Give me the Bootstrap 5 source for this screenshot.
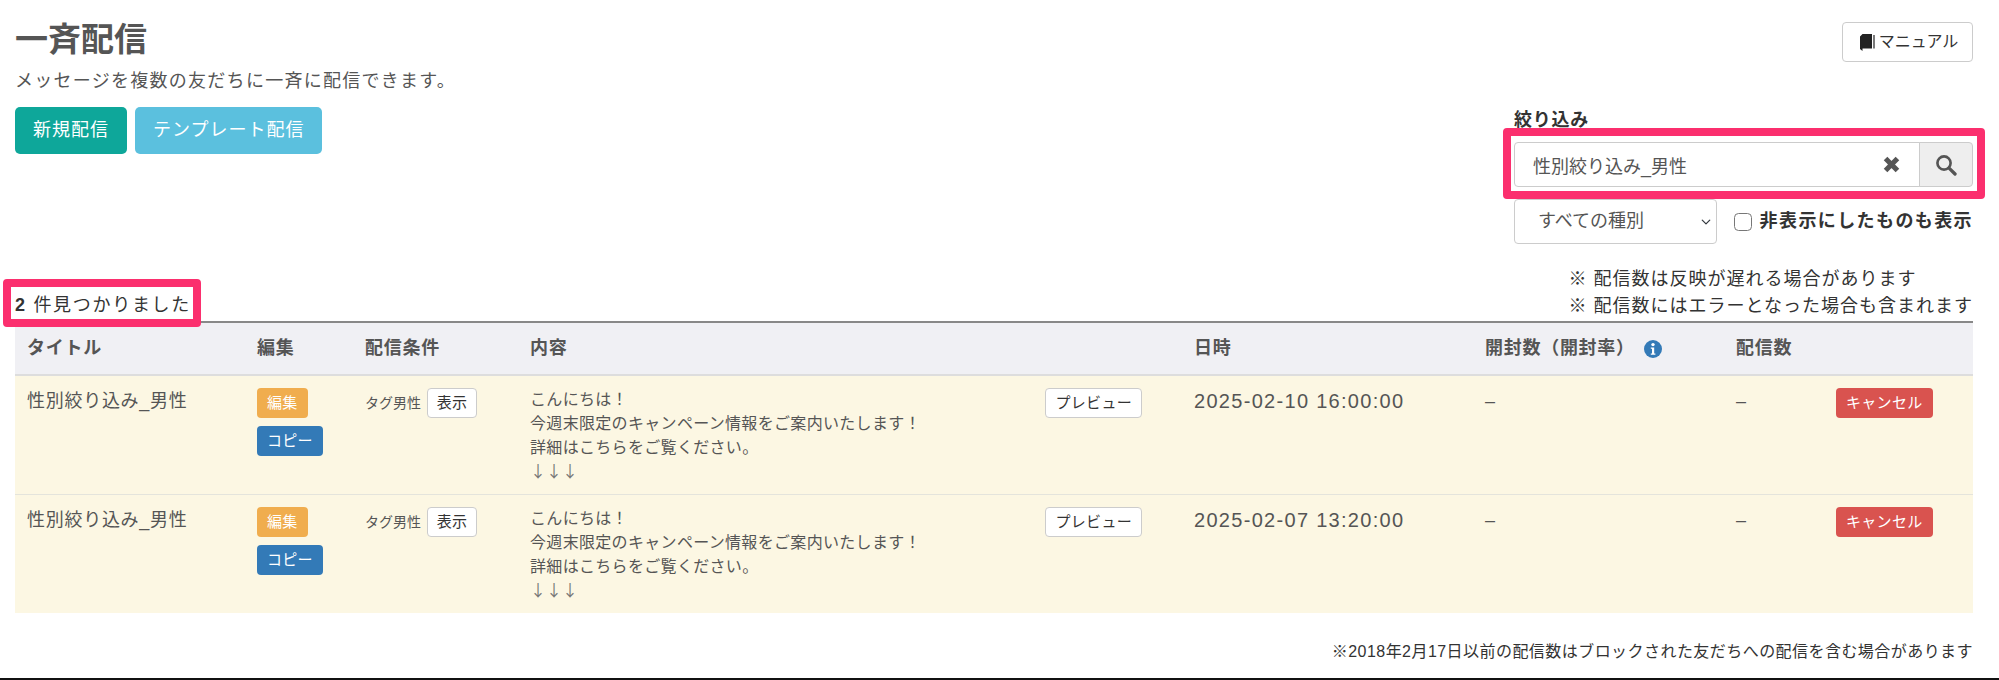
<!DOCTYPE html>
<html lang="ja">
<head>
    <meta charset="UTF-8">
    <title>一斉配信</title>
    <link href="https://cdn.jsdelivr.net/npm/bootstrap@5.3.0/dist/css/bootstrap.min.css" rel="stylesheet">
    <style>
        body {
            font-family: "Liberation Sans", "Noto Sans CJK JP", sans-serif;
            font-size: 18px;
            letter-spacing: .04em;
            color: #555;
            height: 680px;
            overflow: hidden;
        }
        .page-wrap { height: 680px; padding: 0 26px 0 15px; border-bottom: 2px solid #111; }
        .page-title { font-size: 33px; font-weight: 700; line-height: 40px; margin: 20px 0 8px; color: #555; letter-spacing: 0; }
        .page-sub { line-height: 26px; margin-bottom: 13px; letter-spacing: 1.27px; }
        .act-btn { font-size: 18px; letter-spacing: 1px; color: #fff; height: 47px; padding: 0 17px; border: 1px solid transparent; border-radius: 5px; }
        .act-teal { background: #0ea79a; }
        .act-info { background: #5bc0de; }
        .side-col { width: 459px; padding-top: 22px; }
        .manual-btn { font-size: 16px; height: 40px; width: 131px; color: #333; background: #fff; border: 1px solid #ccc; border-radius: 4px; padding: 0 0 0 3px; }
        .filter-label { font-weight: 700; font-size: 18px; color: #333; line-height: 26px; margin-top: 45px; }
        .filter-box { position: relative; margin-top: 9px; }
        .filter-box .form-control { height: 45px; font-size: 18px; color: #555; border-color: #ccc; padding-left: 18px; padding-right: 40px; border-radius: 4px 0 0 4px; }
        .filter-box .input-group-text { width: 54px; justify-content: center; background: #eee; border-color: #ccc; border-radius: 0 4px 4px 0; padding: 0; }
        .clear-mark { position: absolute; right: 73px; top: 14px; z-index: 5; line-height: 1; }
        .pink-frame { position: absolute; border: 8px solid #fb2f6e; border-radius: 4px; pointer-events: none; z-index: 6; }
        .filter-frame { left: -11px; right: -12px; top: -14px; bottom: -12px; }
        .kind-select { width: 206px; height: 45px; font-size: 18px; color: #555; border-color: #ccc; border-radius: 4px; padding-left: 23px; background-position: right 3px center; background-size: 14px 10px; }
        .filter-row { margin-top: 12px; gap: 17px; }
        .hide-check { font-weight: 700; color: #333; font-size: 18px; letter-spacing: 1.4px; white-space: nowrap; }
        .hide-check input { width: 18px; height: 18px; margin: 0 8px 0 0; border-color: #777; border-radius: 3px; }
        .status-row { margin-top: 22px; padding-bottom: 1px; }
        .count-line { position: relative; font-size: 18px; letter-spacing: 1.7px; color: #333; line-height: 26px; padding-bottom: 2px; }
        .count-frame { left: -12px; right: -10px; top: -13px; bottom: -7px; }
        .note-lines { line-height: 27px; color: #333; font-size: 18px; letter-spacing: 1px; }
        .list-table { table-layout: fixed; width: 1958px; margin: 0; border-top: 2px solid #888; color: #555; }
        .list-table th { background: #f0f0f4; font-size: 18px; padding: 12px; height: 50px; color: #555; border-bottom: 2px solid #ddd; vertical-align: middle; }
        .list-table td { background: #fcf7e3; padding: 12px 12px 10px; font-size: 18px; line-height: 26px; border-bottom: 1px solid #e4e4dc; vertical-align: top; }
        .list-table tr:last-child td { border-bottom: 0; }
        .list-table th:nth-child(1) { width: 230px; }
        .list-table th:nth-child(2) { width: 108px; }
        .list-table th:nth-child(3) { width: 165px; }
        .list-table th:nth-child(4) { width: 664px; }
        .list-table th:nth-child(5) { width: 291px; }
        .list-table th:nth-child(6) { width: 251px; }
        .list-table th:nth-child(7) { width: 100px; }
        .mini-btn { font-size: 15px; line-height: 28px; height: 30px; padding: 0 9px; border-radius: 4px; border: 1px solid transparent; color: #fff; display: inline-block; letter-spacing: .02em; white-space: nowrap; }
        .mini-orange { background: #f0ad4e; }
        .mini-blue { background: #337ab7; }
        .mini-red { background: #d9534f; }
        .mini-white { background: #fff; border-color: #ccc; color: #333; }
        .tag-text { font-size: 14px; letter-spacing: 0; }
        .msg-text { font-size: 16px; line-height: 24px; letter-spacing: .02em; }
        .down-arrows { font-family: "Noto Sans CJK JP", sans-serif; letter-spacing: 0; line-height: 1; display: inline-block; color: #777; }
        .preview-cell { margin-right: 28px; }
        .date-text { font-size: 20px !important; letter-spacing: 1.3px; }
        .foot-note { font-size: 16px; color: #333; letter-spacing: .45px; margin-top: 27px; line-height: 24px; }
    </style>
</head>
<body>
<div class="page-wrap">
    <div class="d-flex justify-content-between">
        <div>
            <h1 class="page-title">一斉配信</h1>
            <p class="page-sub">メッセージを複数の友だちに一斉に配信できます。</p>
            <div class="d-flex gap-2">
                <button class="act-btn act-teal">新規配信</button>
                <button class="act-btn act-info">テンプレート配信</button>
            </div>
        </div>
        <div class="side-col">
            <div class="text-end">
                <button class="manual-btn">
                    <svg width="15" height="17" viewBox="0 0 15 17" class="me-1"><path d="M0 2.5 2.5 0H12v14.5H2.5V17L0 15z" fill="#222"/><path d="M13.4 1h1.2v13.5h-1.2z" fill="#222"/></svg>マニュアル
                </button>
            </div>
            <div class="filter-label">絞り込み</div>
            <div class="filter-box">
                <div class="input-group">
                    <input class="form-control" type="text" value="性別絞り込み_男性">
                    <span class="input-group-text">
                        <svg width="22" height="22" viewBox="0 0 20 20"><circle cx="8.2" cy="8.2" r="6" fill="none" stroke="#555" stroke-width="2.4"/><path d="m12.8 12.8 5.4 5.4" stroke="#555" stroke-width="3" stroke-linecap="round"/></svg>
                    </span>
                </div>
                <svg class="clear-mark" width="17" height="17" viewBox="0 0 20 20"><path d="m3 3 14 14M17 3 3 17" stroke="#555" stroke-width="6"/></svg>
                <div class="pink-frame filter-frame"></div>
            </div>
            <div class="d-flex align-items-center filter-row">
                <select class="form-select kind-select"><option>すべての種別</option></select>
                <label class="hide-check d-flex align-items-center"><input type="checkbox" class="form-check-input">非表示にしたものも表示</label>
            </div>
        </div>
    </div>
    <div class="d-flex justify-content-between align-items-end status-row">
        <div class="count-line"><b>2</b> 件見つかりました<div class="pink-frame count-frame"></div></div>
        <div class="note-lines">
            <div>※ 配信数は反映が遅れる場合があります</div>
            <div>※ 配信数にはエラーとなった場合も含まれます</div>
        </div>
    </div>
    <table class="table list-table">
        <thead>
            <tr>
                <th>タイトル</th>
                <th>編集</th>
                <th>配信条件</th>
                <th>内容</th>
                <th>日時</th>
                <th>開封数（開封率）
                    <svg width="18" height="18" viewBox="0 0 18 18" class="ms-1"><circle cx="9" cy="9" r="9" fill="#337ab7"/><circle cx="9" cy="4.6" r="1.7" fill="#fff"/><path d="M6.8 7.4h3.4v6h1.2v1.4H6.8v-1.4H8V8.8H6.8z" fill="#fff"/></svg>
                </th>
                <th>配信数</th>
                <th></th>
            </tr>
        </thead>
        <tbody>
            <tr>
                <td>性別絞り込み_男性</td>
                <td>
                    <div class="d-flex flex-column align-items-start gap-2">
                        <span class="mini-btn mini-orange">編集</span>
                        <span class="mini-btn mini-blue">コピー</span>
                    </div>
                </td>
                <td><span class="tag-text">タグ男性</span> <span class="mini-btn mini-white">表示</span></td>
                <td>
                    <div class="d-flex justify-content-between align-items-start">
                        <div class="msg-text">こんにちは！<br>今週末限定のキャンペーン情報をご案内いたします！<br>詳細はこちらをご覧ください。<br><span class="down-arrows">↓↓↓</span></div>
                        <span class="mini-btn mini-white preview-cell">プレビュー</span>
                    </div>
                </td>
                <td class="date-text">2025-02-10 16:00:00</td>
                <td>–</td>
                <td>–</td>
                <td><span class="mini-btn mini-red">キャンセル</span></td>
            </tr>
            <tr>
                <td>性別絞り込み_男性</td>
                <td>
                    <div class="d-flex flex-column align-items-start gap-2">
                        <span class="mini-btn mini-orange">編集</span>
                        <span class="mini-btn mini-blue">コピー</span>
                    </div>
                </td>
                <td><span class="tag-text">タグ男性</span> <span class="mini-btn mini-white">表示</span></td>
                <td>
                    <div class="d-flex justify-content-between align-items-start">
                        <div class="msg-text">こんにちは！<br>今週末限定のキャンペーン情報をご案内いたします！<br>詳細はこちらをご覧ください。<br><span class="down-arrows">↓↓↓</span></div>
                        <span class="mini-btn mini-white preview-cell">プレビュー</span>
                    </div>
                </td>
                <td class="date-text">2025-02-07 13:20:00</td>
                <td>–</td>
                <td>–</td>
                <td><span class="mini-btn mini-red">キャンセル</span></td>
            </tr>
        </tbody>
    </table>
    <div class="foot-note text-end">※2018年2月17日以前の配信数はブロックされた友だちへの配信を含む場合があります</div>
</div>
<script src="https://cdn.jsdelivr.net/npm/bootstrap@5.3.0/dist/js/bootstrap.bundle.min.js"></script>
</body>
</html>
